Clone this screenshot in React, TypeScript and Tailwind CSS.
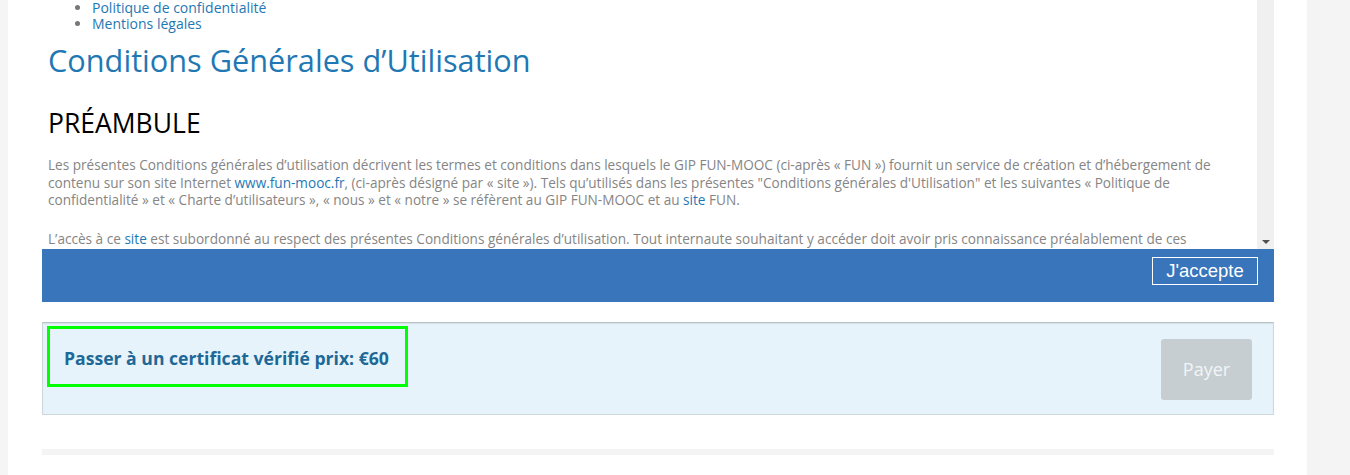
import React from "react";

export default function App() {
  const font = { fontFamily: '"Open Sans", "Noto Sans", sans-serif' };
  return (
    <div className="flex h-[475px] w-[1350px] overflow-hidden bg-white" style={font}>
      <div className="w-[8px] shrink-0 bg-[#f5f5f5]" />
      <div className="flex w-[1299px] shrink-0 flex-col pl-[34px] pr-[33px]">
        {/* scroll box */}
        <div className="flex h-[249px] shrink-0">
          <div className="h-full flex-1 overflow-hidden">
            <div className="pl-[6px] pr-[20px]">
              <ul className="ml-[44px] list-disc text-[14px] leading-[16px] text-[#1f78b4] marker:text-[#777]">
                <li>Politique de confidentialité</li>
                <li>Mentions légales</li>
              </ul>
              <h1 className="mt-[8px] text-[30.7px] leading-[40px] font-normal text-[#1f78b4]">
                Conditions Générales d’Utilisation
              </h1>
              <h2 className="mt-[26px] text-[26.5px] leading-[34px] text-black">PRÉAMBULE</h2>
              <p className="mt-[16px] text-[13.6px] leading-[17.5px] text-[#858585]">
                Les présentes Conditions générales d’utilisation décrivent les termes et conditions dans lesquels le GIP FUN-MOOC (ci-après « FUN ») fournit un service de création et d’hébergement de contenu sur son site Internet{" "}
                <span className="text-[#1f78b4]">www.fun-mooc.fr</span>, (ci-après désigné par « site »). Tels qu’utilisés dans les présentes "Conditions générales d'Utilisation" et les suivantes « Politique de confidentialité » et « Charte d’utilisateurs », « nous » et « notre » se réfèrent au GIP FUN-MOOC et au{" "}
                <span className="text-[#1f78b4]">site</span> FUN.
              </p>
              <p className="mt-[21.5px] text-[13.6px] leading-[17.5px] text-[#858585]">
                L’accès à ce <span className="text-[#1f78b4]">site</span> est subordonné au respect des présentes Conditions générales d’utilisation. Tout internaute souhaitant y accéder doit avoir pris connaissance préalablement de ces Conditions générales d’utilisation et de la charte d’utilisateurs, de la politique de confidentialité et des mentions légales et s’engage à les respecter sans réserve.
              </p>
            </div>
          </div>
          <div className="flex w-[17px] shrink-0 flex-col justify-end bg-[#f0f0f0] pb-[5px]">
            <div className="mx-auto h-0 w-0 border-x-[4px] border-t-[4px] border-x-transparent border-t-[#505050]" />
          </div>
        </div>
        {/* blue bar */}
        <div className="flex h-[53px] shrink-0 justify-end bg-[#3875bb] pt-[8px] pr-[16px]">
          <button
            className="h-[28px] w-[106px] border border-white text-[18.5px] leading-[26px] text-white"
            style={{ fontFamily: '"Liberation Sans", Arial, sans-serif' }}
          >
            J'accepte
          </button>
        </div>
        {/* certificate */}
        <div className="mt-[20px] flex h-[93px] shrink-0 items-start justify-between border border-[#ccd8de] border-t-[#b9c4c9] bg-[#e7f3fa] shadow-[inset_0_1px_1px_rgba(0,0,0,0.08)]">
          <div className="ml-[4px] mt-[3px] flex h-[61px] w-[361px] items-center border-[3px] border-[#00ff00] pl-[14px] pt-[3px]">
            <span className="text-[17.6px] font-bold text-[#1d6897]">Passer à un certificat vérifié prix: €60</span>
          </div>
          <div className="mr-[21px] mt-[16px] flex h-[61px] w-[91px] items-center justify-center rounded-[3px] bg-[#c6ced2] text-[18px] text-[#f2f5f6]">
            Payer
          </div>
        </div>
        <div className="mt-[34px] h-[6px] shrink-0 bg-[#f4f4f4]" />
      </div>
      <div className="flex-1 bg-[#f4f4f4]" />
    </div>
  );
}
